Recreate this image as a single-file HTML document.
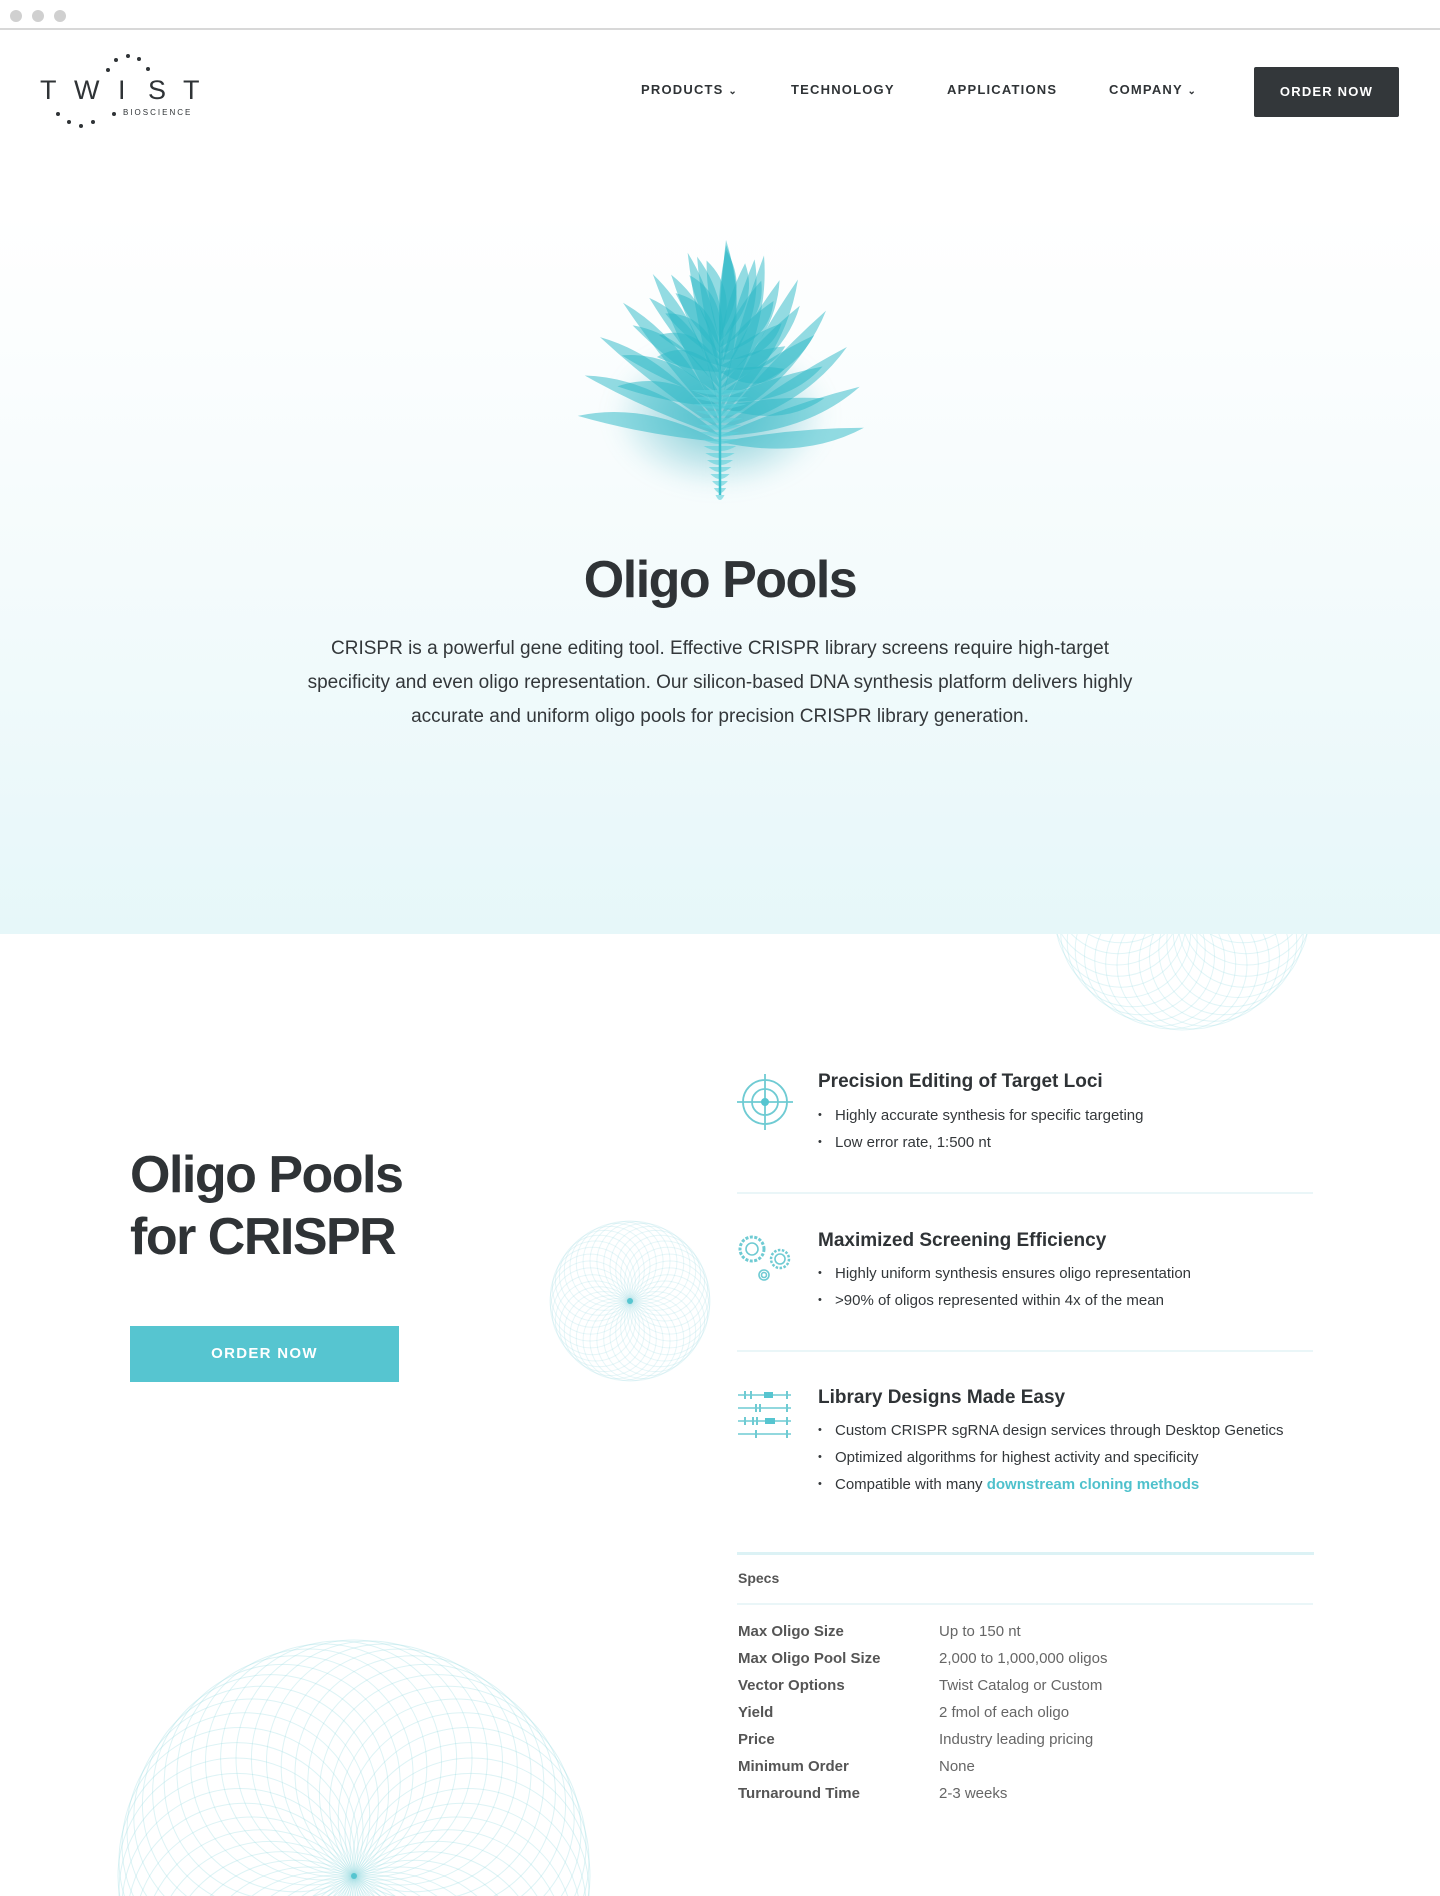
<!DOCTYPE html>
<html style="overflow:hidden;height:1896px"><head><meta charset="utf-8">
<style>
*{margin:0;padding:0;box-sizing:border-box}
body{width:1440px;height:1896px;overflow:hidden;background:#fff;font-family:"Liberation Sans",sans-serif;color:#2f3336}
#w{position:relative;width:1440px;height:1896px;overflow:hidden}
.abs{position:absolute}
.bar{top:0;left:0;width:1440px;height:30px;border-bottom:2px solid #d8d8d8;background:#fff}
.dot{position:absolute;top:10px;width:12px;height:12px;border-radius:50%;background:#d0d0d0}
.hero{top:32px;left:0;width:1440px;height:902px;background:linear-gradient(#fff 0%,#fff 20%,#f4fbfc 60%,#e6f7f9 100%);z-index:1}
.nav{font-size:13px;font-weight:bold;letter-spacing:1.2px;color:#2f3336;top:82px}
.btn{background:#33373a;color:#fff;font-size:13px;font-weight:bold;letter-spacing:1.2px;left:1254px;top:67px;width:145px;height:50px;line-height:50px;text-align:center;border-radius:2px}
h1{position:absolute;font-size:52px;font-weight:bold;letter-spacing:-1.5px;color:#2f3336}
.p{top:632px;left:220px;width:1000px;text-align:center;font-size:19px;line-height:34px;color:#33373a;white-space:nowrap}
.ft{font-size:19px;font-weight:bold;color:#2f3336;left:818px}
ul{position:absolute;left:818px;list-style:none;font-size:15px;color:#33373a}
ul li{height:27px;line-height:27px;padding-left:17px;position:relative}
ul li:before{content:"•";position:absolute;left:0;font-size:11px}
.hr{left:737px;width:576px;height:2px;background:#eaf6f8}
.sl{left:738px;font-size:15px;font-weight:bold;color:#555}
.sv{left:939px;font-size:15px;color:#666}
</style></head><body><div id="w">
<div class="abs bar"><div class="dot" style="left:10px"></div><div class="dot" style="left:32px"></div><div class="dot" style="left:54px"></div></div>

<svg class="abs" style="left:1030px;top:760px;z-index:0" width="310" height="300" id="sp1"></svg>
<div class="abs hero"></div>

<div class="abs" style="z-index:2;left:0;top:0;width:1440px;height:934px">
<svg class="abs" style="left:36px;top:52px" width="175" height="80">
<g fill="#2f3336">
<circle cx="80" cy="8" r="2"/><circle cx="92" cy="4" r="2"/><circle cx="103" cy="7" r="2"/><circle cx="72" cy="18" r="2"/><circle cx="112" cy="17" r="2"/>
<circle cx="22" cy="62" r="2"/><circle cx="33" cy="70" r="2"/><circle cx="45" cy="74" r="2"/><circle cx="57" cy="70" r="2"/><circle cx="78" cy="62" r="2"/>
</g>
<g font-family="Liberation Sans" fill="#2f3336" font-size="27">
<text x="4" y="47">T</text><text x="38" y="47">W</text><text x="82" y="47">I</text><text x="112" y="47">S</text><text x="147" y="47">T</text></g>
<text x="87" y="63" font-size="8" letter-spacing="2" fill="#2f3336" font-family="Liberation Sans">BIOSCIENCE</text>
</svg>
<div class="abs nav" style="left:641px">PRODUCTS <span style="font-size:10px">&#8964;</span></div>
<div class="abs nav" style="left:791px">TECHNOLOGY</div>
<div class="abs nav" style="left:947px">APPLICATIONS</div>
<div class="abs nav" style="left:1109px">COMPANY <span style="font-size:10px">&#8964;</span></div>
<div class="abs btn">ORDER NOW</div>

<div class="abs" style="left:610px;top:340px;width:220px;height:150px;border-radius:50%;background:radial-gradient(rgba(20,160,180,.6),rgba(20,160,180,0) 70%);filter:blur(10px)"></div>
<svg class="abs" style="left:560px;top:200px" width="320" height="300" id="plant"></svg>

<h1 style="top:550px;left:0;width:1440px;text-align:center">Oligo Pools</h1>
<div class="abs p">CRISPR is a powerful gene editing tool. Effective CRISPR library screens require high-target<br>specificity and even oligo representation. Our silicon-based DNA synthesis platform delivers highly<br>accurate and uniform oligo pools for precision CRISPR library generation.</div>
</div>

<svg class="abs" style="left:540px;top:1211px" width="180" height="180" id="sp2"></svg>
<svg class="abs" style="left:104px;top:1626px" width="500" height="270" id="sp3"></svg>

<h1 style="top:1144px;left:130px;line-height:62px">Oligo Pools<br>for CRISPR</h1>
<div class="abs" style="left:130px;top:1326px;width:269px;height:56px;background:#56c5d0;color:#fff;font-weight:bold;font-size:15px;letter-spacing:1.3px;text-align:center;line-height:56px">ORDER NOW</div>

<svg class="abs" style="left:735px;top:1072px" width="60" height="60" fill="none" stroke="#6fcbd3" stroke-width="1.8">
<circle cx="30" cy="30" r="22"/><circle cx="30" cy="30" r="13"/><path d="M30 2V58M2 30H58"/><circle cx="30" cy="30" r="4" fill="#56c5d0" stroke="none"/></svg>
<div class="abs ft" style="top:1071px">Precision Editing of Target Loci</div>
<ul style="top:1102px"><li>Highly accurate synthesis for specific targeting</li><li>Low error rate, 1:500 nt</li></ul>
<div class="abs hr" style="top:1192px"></div>

<svg class="abs" style="left:735px;top:1232px" width="60" height="52" fill="none" stroke="#6fcbd3" stroke-width="1.6">
<circle cx="17" cy="17" r="12" stroke-dasharray="3 1.5" stroke-width="3"/><circle cx="17" cy="17" r="6"/>
<circle cx="45" cy="27" r="9" stroke-dasharray="2.5 1.5" stroke-width="2.5"/><circle cx="45" cy="27" r="5"/>
<circle cx="29" cy="43" r="5"/><circle cx="29" cy="43" r="2.5"/></svg>
<div class="abs ft" style="top:1230px">Maximized Screening Efficiency</div>
<ul style="top:1260px"><li>Highly uniform synthesis ensures oligo representation</li><li>&gt;90% of oligos represented within 4x of the mean</li></ul>
<div class="abs hr" style="top:1350px"></div>

<svg class="abs" style="left:736px;top:1388px" width="56" height="52" stroke="#6fcbd3" stroke-width="2" fill="#56c5d0">
<path d="M2 7H55M2 20H55M2 33H55M2 46H55" stroke-width="1.5"/>
<path d="M9 3V11M15 3V11M51 3V11M20 16V24M24 16V24M51 16V24M9 29V37M17 29V37M21 29V37M51 29V37M20 42V50M51 42V50" />
<rect x="28" y="4" width="9" height="6" stroke="none"/><rect x="29" y="30" width="10" height="6" stroke="none"/></svg>
<div class="abs ft" style="top:1387px">Library Designs Made Easy</div>
<ul style="top:1417px"><li>Custom CRISPR sgRNA design services through Desktop Genetics</li><li>Optimized algorithms for highest activity and specificity</li><li>Compatible with many <b style="color:#4fc1cc">downstream cloning methods</b></li></ul>

<div class="abs" style="left:737px;top:1552px;width:577px;height:3px;background:#dcf2f5"></div>
<div class="abs sl" style="top:1570px;font-size:14px">Specs</div>
<div class="abs hr" style="top:1603px"></div>
<div class="abs sl" style="top:1623px">Max Oligo Size</div><div class="abs sv" style="top:1623px">Up to 150 nt</div>
<div class="abs sl" style="top:1650px">Max Oligo Pool Size</div><div class="abs sv" style="top:1650px">2,000 to 1,000,000 oligos</div>
<div class="abs sl" style="top:1677px">Vector Options</div><div class="abs sv" style="top:1677px">Twist Catalog or Custom</div>
<div class="abs sl" style="top:1704px">Yield</div><div class="abs sv" style="top:1704px">2 fmol of each oligo</div>
<div class="abs sl" style="top:1731px">Price</div><div class="abs sv" style="top:1731px">Industry leading pricing</div>
<div class="abs sl" style="top:1758px">Minimum Order</div><div class="abs sv" style="top:1758px">None</div>
<div class="abs sl" style="top:1785px">Turnaround Time</div><div class="abs sv" style="top:1785px">2-3 weeks</div>
</div>
<script>
function spiro(id,cx,cy,r,n,dot,op){
 var s=document.getElementById(id),h='';
 for(var i=0;i<n;i++){var a=i/n*2*Math.PI;h+='<circle cx="'+(cx+r*Math.cos(a)).toFixed(1)+'" cy="'+(cy+r*Math.sin(a)).toFixed(1)+'" r="'+r+'" fill="none" stroke="#9fdde3" stroke-opacity="'+op+'" stroke-width="1"/>';}
 if(dot)h+='<circle cx="'+cx+'" cy="'+cy+'" r="3" fill="#56c5d0"/>';
 s.innerHTML=h;}
spiro('sp1',152,140,65,36,false,.3);
spiro('sp2',90,90,40,36,true,.25);
spiro('sp3',250,250,118,48,true,.35);
var p=document.getElementById('plant'),h='';
var bx=160,by=290;
for(var k=0;k<3;k++){
 for(var i=0;i<13;i++){
  var ang=-82+i*164/12, len=165-k*40-Math.abs(ang)*0.25;
  var sx=bx, sy=by-85-k*35;
  h+='<path transform="translate('+sx+' '+(sy+Math.abs(ang)*0.45)+') rotate('+ang+')" d="M0 0 Q30 '+(-len*0.55)+' 6 '+(-len)+' Q-4 '+(-len*0.5)+' 0 0Z" fill="#2ab7c6" fill-opacity=".5"/>';
 }}
for(var j=0;j<16;j++){var y=by-100+j*7,w=30-j*1.7;h+='<path d="M'+(bx-w)+' '+y+'Q'+bx+' '+(y+10)+' '+(bx+w)+' '+y+'" fill="#5cd0db" fill-opacity=".6"/>';}
h+='<path d="M'+bx+' '+(by-120)+'L'+bx+' '+(by+5)+'" stroke="#3cc0cc" stroke-width="2.5"/>';
p.innerHTML=h;
</script>
</body></html>
